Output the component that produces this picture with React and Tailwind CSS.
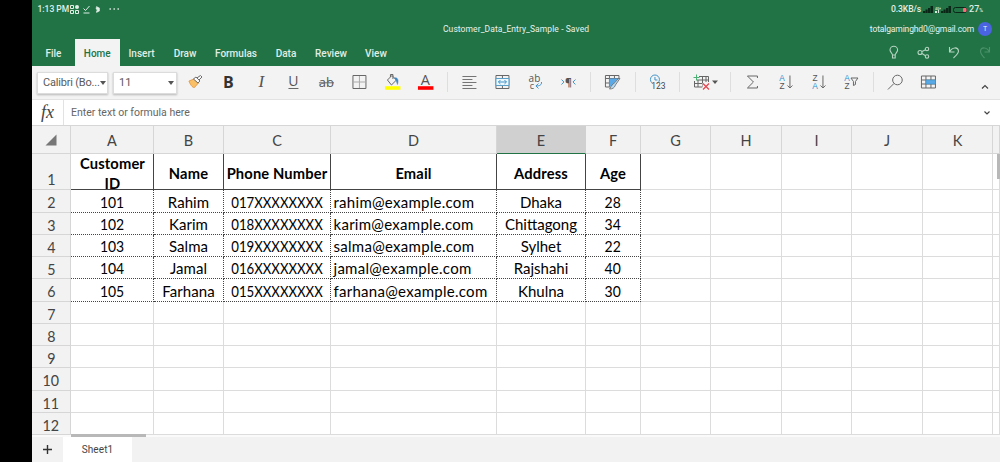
const heads = ["A", "B", "C", "D", "E", "F", "G", "H", "I", "J", "K", ""];
const rows = [
  ["Customer ID", "Name", "Phone Number", "Email", "Address", "Age"],
  ["101", "Rahim", "017XXXXXXXX", "rahim@example.com", "Dhaka", "28"],
  ["102", "Karim", "018XXXXXXXX", "karim@example.com", "Chittagong", "34"],
  ["103", "Salma", "019XXXXXXXX", "salma@example.com", "Sylhet", "22"],
  ["104", "Jamal", "016XXXXXXXX", "jamal@example.com", "Rajshahi", "40"],
  ["105", "Farhana", "015XXXXXXXX", "farhana@example.com", "Khulna", "30"],
  [], [], [], [], [], [],
];

const bodyText = ["scale-x-[0.930]", "tracking-[0.050px]", "scale-x-[0.880]", "tracking-[0.280px]", "", "scale-x-[0.930]"];

function Tool({ children, w = 32.9 }) {
  return (
    <svg width={w} height="34" viewBox={`${-w / 2} -17 ${w} 34`} fill="none" stroke="#666" strokeWidth="1" className="shrink-0">
      {children}
    </svg>
  );
}

function Sep() {
  return (
    <div className="flex h-5 w-[11.5px] shrink-0 justify-center">
      <div className="w-px bg-[#dedede]" />
    </div>
  );
}

function Glyph({ children, x = 0, y = 0, size = 9, fill = "#555", weight = 400, family = "Open Sans, sans-serif", italic }) {
  return (
    <text x={x} y={y} fontSize={size} fill={fill} stroke="none" fontWeight={weight} fontFamily={family} fontStyle={italic ? "italic" : "normal"} textAnchor="middle">
      {children}
    </text>
  );
}

function SortLetters({ top, bottom, topFill = "#555", bottomFill = "#555" }) {
  return (
    <>
      <Glyph x={-3.5} y={-1} size={8.3} fill={topFill} family="Liberation Sans, sans-serif">{top}</Glyph>
      <Glyph x={-3.5} y={6.5} size={8.3} fill={bottomFill} family="Liberation Sans, sans-serif">{bottom}</Glyph>
    </>
  );
}

function Select({ label, className }) {
  return (
    <div className={`flex h-[22px] shrink-0 items-center justify-between border border-[#dcdcdc] bg-white pr-[2px] pl-[5px] text-[11px] text-[#5a5a5a] shadow-[0_1px_2px_rgba(0,0,0,0.25)] ${className}`}>
      <span className="pt-px whitespace-nowrap">{label}</span>
      <svg width="6" height="4" viewBox="0 0 6 4" fill="#555" className="shrink-0"><path d="M0 0h6L3 4z" /></svg>
    </div>
  );
}

function Toolbar() {
  return (
    <div className="flex h-[34px] shrink-0 items-center border-b border-[#e2e2e2] bg-[#f3f3f3] pl-[5px]">
      <Select label="Calibri (Bo..." className="w-[71px] tracking-[-0.2px]" />
      <Select label="11" className="ml-[5px] w-[64px]" />
      <div className="mb-px ml-[1.8px] flex items-center">
        <Tool>
          <path d="M-6.500-1L-1.500-3 3 1-1 5.500C-3 6-5.500 2-6.500-1z" fill="#f9c067" stroke="#e0913a" strokeWidth=".8" />
          <path d="M-2-3L.5-5 4.500-1 2.500 1zM1.500-4L5-6.500 6.500-5 3.500-2" fill="#fff" stroke="#666" />
        </Tool>
        <Tool><Glyph y={5.700} size={16} weight={700} fill="#333">B</Glyph></Tool>
        <Tool><Glyph y={5} size={17} italic family="Liberation Serif, serif">I</Glyph></Tool>
        <Tool><Glyph y={4} size={14}>U</Glyph><path d="M-5 6.500H5" /></Tool>
        <Tool><Glyph y={5} size={13}>ab</Glyph><path d="M-7.500 .8H7.500" /></Tool>
        <Tool><path d="M-6.500-6.500h13v13h-13z" /><path d="M0-6V6M-6 0H6" stroke="#aaa" /></Tool>
        <Tool>
          <path d="M-5-2L-.5-6.500 4-2-1 3zM-2-5v-2.500h2.500V-3" />
          <path d="M2-4C5-5 6.500-2 5 2.500 4.500 1 4-2 2-4z" fill="#3a86c0" stroke="#3a86c0" strokeWidth=".5" />
          <path d="M-7.500 4.200h15.500v3.600h-15.500z" fill="#ff0" stroke="none" />
        </Tool>
        <Tool><Glyph y={3} size={14.500}>A</Glyph><path d="M-7.500 4.200h15.500v3.600h-15.500z" fill="#f00" stroke="none" /></Tool>
        <Sep />
        <Tool><path d="M-7-5.500H7M-7-2.500H3M-7 .5H7M-7 3.500H3M-7 6.500H7" strokeWidth=".9" /></Tool>
        <Tool>
          <path d="M-6.500-6.500h13v13h-13zM0-6.500v3M0 3.500v3" />
          <path d="M-6.500-3.500h13v7h-13z" fill="#eef8fd" stroke="#5a9fc8" />
          <path d="M-4 0H4M-2-2L-4 0-2 2M2-2L4 0 2 2" stroke="#3f93c8" />
        </Tool>
        <Tool>
          <Glyph x={-1} y={-0.500} size={10}>ab</Glyph><Glyph x={-3.500} y={6.500} size={9}>c</Glyph>
          <path d="M6 0C6.500 3 4 4 0.500 4M3 1.500L.5 4 3 6.500" stroke="#3f93c8" />
        </Tool>
        <Tool>
          <Glyph x={0} y={4} size={10.500} weight={700}>¶</Glyph>
          <path d="M-7-2.500L-4.500 0-7 2.500M7-2.500L4.500 0 7 2.500" stroke="#3f93c8" />
        </Tool>
        <Sep />
        <Tool>
          <path d="M-7-6.500H6.500V-3M-7-6.500V5h5M-7-3.500H6.500M-7 1h4M-3-6.500V5M2-6.500v3" />
          <path d="M-3-3.500H5.500L0 3.500-3 5z" fill="#5aa9e6" stroke="none" />
          <path d="M7.500-3.500L3 3C2 6 0 7-3 7-1.500 6-1.500 3 1 2L6-3.500z" fill="#b9dcf5" strokeWidth=".8" />
        </Tool>
        <Sep />
        <Tool>
          <circle cx="-2.500" cy="-2.500" r="4.500" stroke="#3f93c8" /><path d="M-2.500-5v3h2.500" stroke="#3f93c8" />
          <path d="M-5 0H8v8H-5z" fill="#f3f3f3" stroke="none" />
          <Glyph x={1} y={7} size={8.500} fill="#444" family="Roboto, sans-serif">123</Glyph>
        </Tool>
        <Sep />
        <Tool w={39}>
          <g transform="translate(-3.500 0)">
            <path d="M-2-5.500H7.500V0M-6.500-1V5h8M-6.500 1.500H3M-4-2H7.500M-3-2v7M1.500-5.500V5M5-5.500V0" />
            <path d="M1.500 1h7v7h-7z" fill="#f3f3f3" stroke="none" />
            <path d="M-4.500-7.500v6M-7.500-4.500h6" stroke="#4caf73" /><path d="M2 1.500l6 6M8 1.500l-6 6" stroke="#e8434f" strokeWidth="1.200" />
          </g>
          <path d="M7.500-1.500h6l-3 3.500z" fill="#555" stroke="none" />
        </Tool>
        <Sep />
        <Tool><path d="M5-4V-6H-5L1 0-5 6H5V4" /></Tool>
        <Tool><SortLetters top="A" bottom="Z" topFill="#2b8fd0" /><path d="M4.500-6.500v12M2 3.500L4.500 6 7 3.500" /></Tool>
        <Tool><SortLetters top="Z" bottom="A" bottomFill="#2b8fd0" /><path d="M4.500-6.500v12M2 3.500L4.500 6 7 3.500" /></Tool>
        <Tool><SortLetters top="A" bottom="Z" topFill="#2b8fd0" /><path d="M.5-4h7L5-.5v3l-2 1v-4z" /></Tool>
        <Sep />
        <Tool><circle cx="2" cy="-2" r="4.800" /><path d="M-1.500 1.500l-6 6" /></Tool>
        <Tool>
          <path d="M-7-6H7V6H-7zM-7-2H7M-7 2H7M-2.500-6V6M2.500-6V6" />
          <path d="M-2.500-2H7V2H-2.500z" fill="#5aa9e6" stroke="#3f93c8" strokeWidth=".6" />
        </Tool>
      </div>
      <svg width="8" height="6" viewBox="0 0 8 6" className="mt-2 mr-[11px] ml-auto" fill="none" stroke="#444" strokeWidth="1.200"><path d="M1 4.500L4 1.500 7 4.500" /></svg>
    </div>
  );
}

function Bars() {
  return (
    <svg width="10" height="7" viewBox="0 0 10 7" fill="#0b2616"><path d="M0 5h2.200v2H0zM2.500 3.500h2.200V7H2.500zM5 2h2.200v5H5zM7.500 0H10v7H7.500z" /></svg>
  );
}

function Header() {
  return (
    <header className="flex h-[66px] shrink-0 flex-col bg-[#217346] text-white">
      <div className="flex h-[19px] items-center pr-[17px] pl-[5.500px] text-[8.500px] font-medium text-[#e0eee5]">
        <span className="whitespace-nowrap">1:13 PM</span>
        <svg width="50" height="9" viewBox="0 0 50 9" className="ml-[1px]" fill="none" stroke="currentColor">
          <path d="M.5.500h3v3h-3zM.5 5.500h3v3h-3zM5.500 5.500h3v3h-3z" /><circle cx="7" cy="2" r="2" fill="currentColor" stroke="none" />
          <path d="M13.500 3.500l2 2 4-4.500M13.500 8h6" />
          <path d="M26.500 1.500l3 1.500v3l-3 1.500V6l1-1-1.500-1z" fill="currentColor" strokeWidth=".5" />
          <path d="M39.500 4h1.400M43.500 4h1.400M47.500 4h1.400" strokeWidth="1.400" />
        </svg>
        <div className="ml-auto flex items-center">
          <span className="text-[8.600px] tracking-[-0.1px]">0.3KB/s</span>
          <span className="ml-[2px]"><Bars /></span>
          <svg width="6" height="8" viewBox="0 0 6 8" className="ml-[2px]"><text x="0" y="3.500" fontSize="3.500" fill="#d5e8dc">4G+</text><path d="M0 5h2v2H0zM3 4h1v3H3z" fill="#d5e8dc" /></svg>
          <Bars />
          <svg width="14" height="6" viewBox="0 0 14 6" className="ml-[2px]"><rect x=".5" y=".5" width="13" height="5" rx="2" fill="none" stroke="#0b2616" /><rect x="10" y="1" width="3.500" height="4" rx="1" fill="#ff6b7a" /></svg>
          <span className="ml-[2px] text-[9px]">27<span className="text-[5px]">%</span></span>
        </div>
      </div>
      <div className="grid h-5 grid-cols-[1fr_146px_1fr] items-center text-[8.500px] text-[#e8f2ec]">
        <span />
        <span className="text-center tracking-[0.080px] whitespace-nowrap">Customer_Data_Entry_Sample - Saved</span>
        <div className="flex items-center justify-end gap-[4px] pr-[8px]">
          <span className="tracking-[-0.130px]">totalgaminghd0@gmail.com</span>
          <span className="flex size-[14px] items-center justify-center rounded-full bg-[#4a63e0] text-[7px]">T</span>
        </div>
      </div>
      <nav className="flex h-[27px] items-center text-[10px] font-medium text-[#e0eee5]">
        <span className="w-[43px] pt-[2px] text-center">File</span>
        <span className="flex h-full w-[44.500px] items-center justify-center bg-[#f3f3f3] pt-[2px] text-[#217346]">Home</span>
        <span className="w-[44px] pt-[2px] text-center">Insert</span>
        <span className="w-[43px] pt-[2px] text-center">Draw</span>
        <span className="w-[59px] pt-[2px] text-center">Formulas</span>
        <span className="w-[41px] pt-[2px] text-center">Data</span>
        <span className="w-[49px] pt-[2px] text-center">Review</span>
        <span className="w-[41px] pt-[2px] text-center">View</span>
        <svg width="111" height="16" viewBox="0 0 111 16" className="ml-auto" fill="none" stroke="#b5d4c1" strokeWidth="1.100">
          <path d="M2.500 10C2.500 8.500 0 7 0 5a3.800 3.800 0 0 1 7.600 0C7.600 7 5.200 8.500 5.200 10zM2.500 10v3h2.700v-3" transform="translate(1 0)" />
          <circle cx="31" cy="7.500" r="2" /><circle cx="38" cy="4" r="1.700" /><circle cx="38" cy="11.500" r="1.700" /><path d="M33 6.500l3.500-1.700M33 8.500l3.500 2.200" />
          <path d="M60.500 2v5h5M60.500 7C63 2 69 1.500 69.500 6c0 2.500-2 4-5 7" />
          <path d="M100.500 2v5h-5M100.500 7C98 2 92 1.500 91.500 6c0 2.500 1 4 4 7" stroke="#4b9169" />
        </svg>
      </nav>
    </header>
  );
}

const cols = "grid grid-cols-[39px_83px_70px_107px_166px_89px_55px_70px_71px_70px_71px_70px_7px] grid-rows-[100%] shrink-0";
const heights = ["h-[36px]", "h-[23px]", "h-[22px]", "h-[22px]", "h-[22px]", "h-[23px]", "h-[22px]", "h-[22px]", "h-[22px]", "h-[23px]", "h-[22px]", "h-[22px]"];

function Cell({ value, r, c }) {
  const data = r < 6 && c < 6;
  const line = !data
    ? "border-[#dcdcdc]"
    : r === 0 ? "border-[#444]" : "border-dotted border-[#444]";
  return (
    <div className={`flex items-center overflow-hidden border-r border-b whitespace-nowrap text-black ${line} ${c === 3 && r > 0 ? "pl-[2.500px]" : "justify-center"} ${r === 0 ? "text-[14.700px] font-bold tracking-[0.150px]" : "text-[15px] leading-[19px]"}`}>
      {r === 0 && c === 0
        ? <span className="h-full pl-px text-center leading-[19.500px] whitespace-normal">Customer<br />ID</span>
        : <span className={r === 0 ? "pt-[4px]" : `pt-[2px] ${bodyText[c] ?? ""}`}>{value}</span>}
    </div>
  );
}

export default function App() {
  return (
    <div className="flex h-[462px] w-[1000px] overflow-hidden bg-black pl-8 font-[Roboto,sans-serif]">
      <div className="flex w-[968px] flex-col bg-white">
        <Header />
        <Toolbar />
        <div className="flex h-[25px] shrink-0 items-center bg-white text-[10.500px] text-[#666]">
          <div className="flex h-full w-8 items-center justify-center border-r border-[#e2e2e2] font-['Liberation_Serif',serif] text-[18px] text-[#444] italic">fx</div>
          <span className="ml-[7px]">Enter text or formula here</span>
          <svg width="8" height="6" viewBox="0 0 8 6" className="mr-[9px] ml-auto" fill="none" stroke="#444" strokeWidth="1.200"><path d="M1.500 1.500L4 4 6.500 1.500" /></svg>
        </div>
        <div className="relative flex h-[312px] shrink-0 flex-col overflow-hidden font-[Lato,sans-serif]">
          <div className={`${cols} h-[29px] border-t border-[#d6d6d6] bg-[#f2f2f2] text-[14.500px] text-[#444]`}>
            <div className="flex items-center justify-center border-r border-b border-[#d6d6d6]"><svg width="12" height="12" viewBox="0 0 12 12"><path d="M11.500.5v11H.5z" fill="#777" /></svg></div>
            {heads.map((h, i) => (
              <div key={i} className={`flex items-center justify-center border-r border-b pt-[2px] ${h === "E" ? "border-r-[#d0d0d0] border-b-[#217346] bg-[#d0d0d0]" : "border-[#d6d6d6]"}`}>{h}</div>
            ))}
          </div>
          {rows.map((row, r) => (
            <div key={r} className={`${cols} ${heights[r]}`}>
              <div className={`flex justify-center border-r border-b border-[#d6d6d6] bg-[#f2f2f2] text-[15px] leading-[19px] text-[#444] ${r === 0 ? "items-end" : "items-center"}`}><span className={`scale-x-[0.950] ${r === 0 ? "" : "pt-[3px]"}`}>{r + 1}</span></div>
              {heads.map((h, c) => <Cell key={c} value={row[c]} r={r} c={c} />)}
            </div>
          ))}
          <div className="h-1 shrink-0 border-b border-[#dedede] bg-[#fafafa]" />
          <div className="absolute bottom-0 left-[39px] h-[3px] w-[75px] bg-[#b8b8b8]" />
          <div className="absolute top-[29px] right-0 h-[25px] w-[3px] bg-[#b8b8b8]" />
        </div>
        <div className="flex h-[25px] items-center bg-[#f2f2f2] text-[10px] text-[#444]">
          <svg width="31" height="25" viewBox="0 0 31 25" stroke="#333" strokeWidth="1.400"><path d="M11 12.500h9M15.500 8v9" /></svg>
          <div className="flex h-full w-[69px] items-center justify-center bg-white tracking-[0.100px]">Sheet1</div>
        </div>
      </div>
    </div>
  );
}
